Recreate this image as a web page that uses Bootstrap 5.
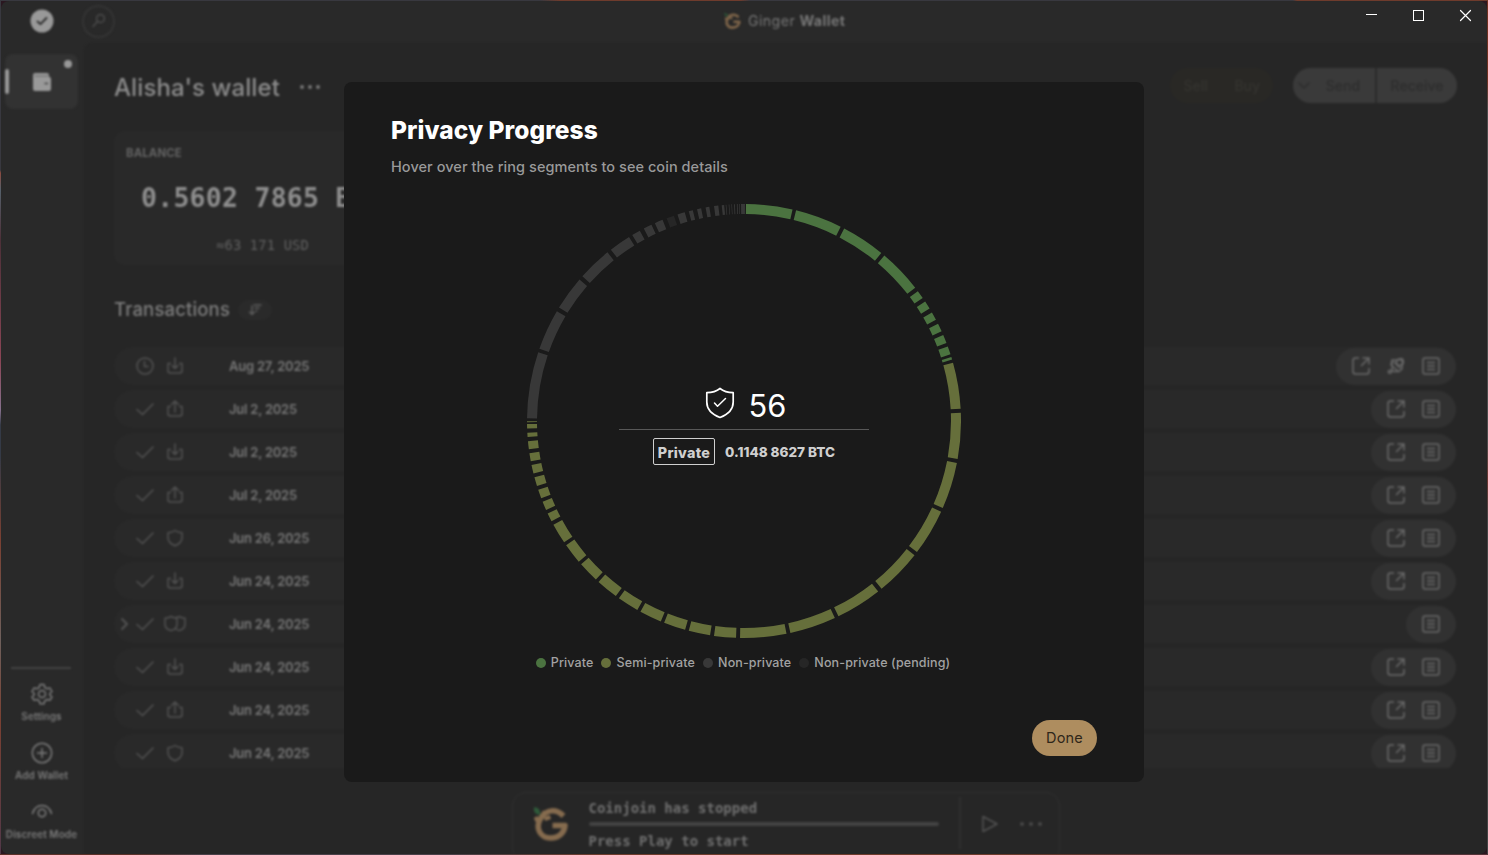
<!DOCTYPE html>
<html lang="en">
<head>
<meta charset="utf-8">
<meta name="viewport" content="width=device-width, initial-scale=1">
<title>Ginger Wallet</title>
<link href="https://cdn.jsdelivr.net/npm/bootstrap@5.3.0/dist/css/bootstrap.min.css" rel="stylesheet">
<style>
  html, body { height: 100%; }
  body { margin: 0; overflow: hidden; background: #2a1720; font-family: Inter, "Open Sans", sans-serif; color: #8c8c8c; }
  svg { display: block; fill: none; stroke: currentColor; stroke-width: 1.5; stroke-linecap: round; stroke-linejoin: round; }
  .desk { height: 100vh; padding: 1px; background:
    linear-gradient(90deg, #38383f 0 540px, #6e3b2c 560px 740px, #38383f 750px 1293px, #6e3b2c 1297px) top/100% 1px no-repeat,
    linear-gradient(90deg, #5c3028 0 130px, #4a4048 200px 450px, #6e3b2c 600px 1000px, #553338 1200px) bottom/100% 1px no-repeat,
    linear-gradient(#38383f 0 170px, #8a4a40 173px, #55606a 190px, #4c3038 240px, #8a4555 360px, #85708c 410px, #343a46 425px 455px, #7a4032 540px, #6e605c 640px, #7a4032 720px, #503848 855px) left/1px 100% no-repeat,
    linear-gradient(#6e3020 0 80px, #4c4c4c 110px 440px, #6a3630 480px, #444 520px) right/1px 100% no-repeat, #2a1720; }
  .win { height: 100%; border-radius: 8px; overflow: hidden; background: #292929; }
  .soft { filter: blur(1px); }
  .topbar { height: 42px; }
  .okdot { width: 24px; height: 24px; margin-left: 29px; margin-top: -2px; color: #292929; }
  .search { width: 33px; height: 33px; margin-left: 28px; margin-top: -2px; border: 2px solid #343434; border-radius: 50%; color: #4c4c4c; }
  .brand { left: 723px; top: 10px; height: 20px; font-size: 14.2px; line-height: 20px; letter-spacing: .4px; color: #777; gap: 6px; }
  .side { width: 83px; }
  .active-wallet { width: 73px; height: 55px; margin: 11px 0 0 4px; background: #323232; border-radius: 8px; color: #999; }
  .active-wallet .bar { left: 0; top: 15px; width: 4px; height: 25px; border-radius: 2px; background: #999; }
  .active-wallet .dot { left: 59px; top: 6px; width: 8px; height: 8px; border-radius: 50%; background: #999; }
  .sep { width: 60px; height: 2px; margin: 0 0 0 10px; background: #434343; }
  .sidenav { padding-top: 14px; margin-bottom: -6px; }
  .sideitem { height: 59px; width: 81px; font-size: 10px; font-weight: 600; line-height: 12px; letter-spacing: .08px; color: #7c7c7c; gap: 5px; }
  .pane { background: #262626; border-top-left-radius: 8px; padding: 0 30px; min-width: 0; }
  .head { height: 88px; }
  .wname { font-size: 24px; font-weight: 500; line-height: 30px; letter-spacing: .09px; margin-top: 1px; }
  .pill { height: 35px; border-radius: 18px; font-size: 14px; font-weight: 500; line-height: 35px; overflow: hidden; margin-top: -3px; }
  .trade { width: 103px; background: #292825; color: #353430; margin-right: 20px; }
  .xfer { width: 164px; background: #3a3a3a; color: #2d2d2d; }
  .xfer .cut { border-left: 2px solid #2b2b2b; }
  .bal { width: 297px; height: 134px; border-radius: 10px; background: #292929; padding-top: 14px; }
  .bal .cap { font-size: 11.4px; font-weight: 700; line-height: 16px; letter-spacing: .1px; color: #626262; margin-left: 12px; }
  .monof { font-family: "DejaVu Sans Mono", monospace; }
  .bal .amt { font-size: 26.5px; font-weight: 700; line-height: 32px; letter-spacing: .25px; color: #8e8e8e; margin: 21px 0 0 27px; white-space: pre; }
  .bal .usd { font-size: 13.8px; line-height: 20px; letter-spacing: .15px; color: #606060; margin: 21px 0 0 102px; white-space: pre; }
  .txh { height: 82px; padding-top: 8px; font-size: 18.5px; font-weight: 500; letter-spacing: .16px; color: #7d7d7d; }
  .sortp { width: 34px; height: 20px; border-radius: 10px; background: #2a2a2a; margin: -1px 0 0 8px; color: #5d5d5d; }
  .list { height: 421px; overflow: hidden; }
  .tx { height: 38px; margin-bottom: 5px; border-radius: 19px; background: #292929; flex-shrink: 0; padding-left: 4px; margin-right: 1px; color: #525252; }
  .tx .date { margin: 2px 0 0 42px; font-size: 13px; font-weight: 600; letter-spacing: -.22px; color: #777; }
  .tx .exp { width: 14px; }
  .tx .st { width: 24px; padding-left: 1px; }
  .tx .kind { width: 24px; margin-left: 7px; }
  .acts { height: 37px; border-radius: 19px; background: #313131; gap: 15px; padding: 0 15px; color: #696969; }
  .music { width: 548px; height: 70px; margin: 24px auto 0; border: 1.5px solid #303030; border-radius: 14px; font-size: 14px; font-weight: 700; color: #707070; padding-left: 19px; position: relative; }
  .music .lines { width: 350px; margin: 6px 0 0 18px; line-height: 18px; }
  .music .prog { height: 4px; margin: 5px 0 6px; background: #434343; border-radius: 2px; }
  .music .split { width: 2px; height: 52px; margin: 4px 0 0 20px; background: #2f2f2f; }
  .winbtns { right: 14px; top: 8px; gap: 31px; color: #fff; }
  .winbtns svg { stroke-width: 1; }
  .veil { inset: 0; padding-top: 82px; }
  .dlg { width: 800px; height: 700px; border-radius: 8px; background: #1a1a1a; padding: 0 47px; }
  .dlg h1 { font-size: 24.5px; font-weight: 800; line-height: 30px; letter-spacing: .05px; margin: 33px 0 0; color: #fff; }
  .dlg .sub { font-size: 14.5px; font-weight: 500; line-height: 20px; letter-spacing: .055px; margin: 12px 0 0; color: #999; }
  .ringbox { width: 434px; height: 434px; margin: 27px auto 0; }
  .ringmid { inset: 0; padding-top: 183px; }
  .num { font-size: 30.8px; line-height: 36px; margin-top: -5px; color: #fff; }
  .rule { width: 250px; height: 1px; background: #585858; }
  .tag { width: 62px; height: 27px; border: 1px solid #d0d0d0; border-radius: 2px; font-size: 14.3px; line-height: 27px; letter-spacing: .3px; }
  .amount { font-size: 13.5px; font-weight: 800; color: #cfcfcf; gap: 10px; margin-top: 8px; line-height: 28px; }
  .legend2 { font-size: 12.5px; font-weight: 500; line-height: 16px; letter-spacing: .13px; margin-top: 17px; color: #a2a2a2; gap: 8px; padding-right: 2px; }
  .legend2 i { width: 10px; height: 10px; border-radius: 50%; margin: -1px 5px 0 0; }
  .done { width: 65px; height: 36px; border-radius: 18px; padding: 0; border: 0; background: #ae8d5f; color: #2e261a; font-size: 14.5px; letter-spacing: .2px; margin-top: 49px; line-height: 36px; }
  .c-private { background: #4b7340; } .c-semi { background: #666f3b; } .c-non { background: #383838; } .c-pending { background: #262626; }
</style>
</head>
<body>
<svg width="0" height="0" class="position-absolute">
  <defs>
    <symbol id="clock" viewBox="0 0 20 20"><circle cx="10" cy="10" r="8"/><path d="M9.5 5.5V10.5H13"/></symbol>
    <symbol id="check" viewBox="0 0 20 20"><path d="M2 10.5L7.5 15.5L18 5"/></symbol>
    <symbol id="down" viewBox="0 0 20 20"><path d="M5.5 7.5H3V14.5Q3 17 5.5 17H14.500Q17 17 17 14.500V7.500H14.500M10 2V12M7 9.500L10 12.500L13 9.500"/></symbol>
    <symbol id="up" viewBox="0 0 20 20"><path d="M5.500 7.500H3V14.500Q3 17 5.500 17H14.500Q17 17 17 14.500V7.500H14.500M10 13V2.500M6.500 5.500L10 2L13.500 5.500"/></symbol>
    <symbol id="shield" viewBox="0 0 20 20"><path d="M10 2.500Q13 4.500 17 4.700V9.500Q17 15 10 17.700Q3 15 3 9.500V4.700Q7 4.500 10 2.500Z"/></symbol>
    <symbol id="coins" viewBox="0 0 24 20"><path d="M8 2.500Q11 4.200 14 4.200V10Q14 15 8 16.500Q2 15 2 10V4.200Q5 4.200 8 2.500ZM13 3.500Q15 3.500 16 2.500Q19 4.200 22 4.200V10Q22 15 16 16.500Q14.500 16.200 13 15"/></symbol>
    <symbol id="open" viewBox="0 0 20 20"><path d="M7.500 2H4.500Q2 2 2 4.500V15.500Q2 18 4.500 18H15.500Q18 18 18 15.500V12.500M10.500 9.500L17.500 2.500M12 2H18V8"/></symbol>
    <symbol id="doc" viewBox="0 0 20 20"><rect x="2" y="2" width="16" height="16" rx="2"/><path d="M6.500 6.500H13.500M6.500 10H13.500M6.500 13.500H13.500"/></symbol>
    <symbol id="rocket" viewBox="0 0 20 20"><path d="M6 4H11Q14 2 16.500 3Q18.500 6 16 9.500V13L13 15.500H7L6 13ZM6 4L5 9L12 15M8 6L14 12"/><circle cx="13.500" cy="6.500" r="3"/><circle cx="3.800" cy="15.800" r="1.500"/></symbol>
    <symbol id="ginger" viewBox="0 0 38 38"><g stroke-linecap="butt"><path stroke-width="5.500" d="M31 11C23 3 14 5 9 12C1 24 9 33 18 33C27 33 32 27 32.500 20.500H20"/><path stroke-width="4" d="M10 13L12 6M12 14L18 12M6 18L3 12"/></g><path d="M2 3Q7 3 7 9Q2 9 2 3Z" fill="#2f5a3a" stroke="#2f5a3a"/></symbol>
  </defs>
</svg>

<div class="desk">
  <div class="win position-relative">
    <div class="soft h-100 d-flex flex-column">
      <header class="topbar d-flex align-items-center flex-shrink-0 position-relative">
        <svg class="okdot" viewBox="0 0 24 24"><circle cx="12" cy="12" r="11.500" fill="#999" stroke="none"/><path d="M7.500 12.500L10.500 15.200L16.500 9" stroke-width="1.800"/></svg>
        <div class="search d-flex align-items-center justify-content-center"><svg width="16" height="16" viewBox="0 0 16 16"><circle cx="9.500" cy="5.500" r="4"/><path d="M6.500 8.500L2 13.500"/></svg></div>
        <div class="brand position-absolute d-flex align-items-center"><svg width="18" height="18" color="#80664a"><use href="#ginger"/></svg><span>Ginger <b>Wallet</b></span></div>
      </header>
      <div class="d-flex flex-grow-1 overflow-hidden">
        <aside class="side d-flex flex-column flex-shrink-0">
          <div class="active-wallet position-relative d-flex align-items-center justify-content-center">
            <span class="bar position-absolute"></span><span class="dot position-absolute"></span>
            <svg width="20" height="20" viewBox="0 0 20 20"><path d="M1 3Q1 1 3 1H15Q17 1 17 3V4.500Q19 5 19 7V17Q19 19 17 19H3Q1 19 1 17Z" fill="#999" stroke="none"/><path d="M3 4H16" stroke="#666" stroke-width="1"/><path d="M13 11.500H15.500" stroke="#444"/></svg>
          </div>
          <div class="mt-auto sep"></div>
          <nav class="sidenav d-flex flex-column">
            <div class="sideitem d-flex flex-column align-items-center"><svg width="22" height="22" viewBox="0 0 22 22"><path d="M9 1.500H13L13.800 4.500L16 5.700L19 5L21 8.500L18.800 10.500V12L21 14L19 17.200L16 16.500L13.800 17.800L13 20.700H9L8.200 17.800L6 16.500L3 17.200L1 14L3.200 12V10.500L1 8.500L3 5L6 5.700L8.200 4.500Z"/><circle cx="11" cy="11" r="3.500"/></svg><span>Settings</span></div>
            <div class="sideitem d-flex flex-column align-items-center"><svg width="22" height="22" viewBox="0 0 22 22"><circle cx="11" cy="11" r="9.700"/><path d="M11 6.500V15.500M6.500 11H15.500"/></svg><span>Add Wallet</span></div>
            <div class="sideitem d-flex flex-column align-items-center"><svg width="22" height="22" viewBox="0 0 22 22"><path d="M1.500 12.500Q4 4.500 11 4.500T20.500 12.500"/><circle cx="11" cy="12" r="3.700"/></svg><span>Discreet Mode</span></div>
          </nav>
        </aside>
        <main class="pane flex-grow-1 d-flex flex-column">
          <div class="head d-flex align-items-center flex-shrink-0">
            <span class="wname">Alisha's wallet</span>
            <svg class="ms-3" width="28" height="6" viewBox="-3 0 28 6"><g fill="#777" stroke="none"><circle cx="3" cy="3" r="2"/><circle cx="11" cy="3" r="2"/><circle cx="19" cy="3" r="2"/></g></svg>
            <div class="pill trade ms-auto d-flex text-center"><span class="w-50">Sell</span><span class="w-50">Buy</span></div>
            <div class="pill xfer d-flex text-center"><span class="w-50 d-flex align-items-center"><svg class="ms-1" width="14" height="10" viewBox="0 0 14 10"><path d="M2 2L7 7L12 2"/></svg><span class="flex-grow-1">Send</span></span><span class="w-50 cut">Receive</span></div>
          </div>
          <section class="bal flex-shrink-0 d-flex flex-column align-items-start">
            <span class="cap">BALANCE</span>
            <span class="amt monof">0.5602 7865 BTC</span>
            <span class="usd monof">≈63 171 USD</span>
          </section>
          <div class="txh d-flex align-items-center flex-shrink-0"><span>Transactions</span><span class="sortp d-flex align-items-center justify-content-center"><svg width="14" height="14" viewBox="0 0 14 14"><path d="M4 3V11M1.500 9L4 11.500L6.500 9M6 2H13M7 5H11M8 8H9"/></svg></span></div>
          <div class="list d-flex flex-column flex-shrink-0" id="list"></div>
          <div class="music d-flex align-items-start flex-shrink-0">
            <svg width="39" height="38" color="#856b4e" style="margin-top:12px"><use href="#ginger"/></svg>
            <div class="lines monof"><div>Coinjoin has stopped</div><div class="prog"></div><div>Press Play to start</div></div>
            <div class="split"></div>
            <svg width="18" height="18" viewBox="0 0 18 18" color="#525252" style="margin:22px 0 0 20px"><path d="M2 1.500L16 9L2 16.500Z"/></svg>
            <svg width="24" height="6" viewBox="0 0 24 6" style="margin:28px 0 0 20px"><g fill="#484848" stroke="none"><circle cx="3" cy="3" r="2"/><circle cx="12" cy="3" r="2"/><circle cx="21" cy="3" r="2"/></g></svg>
          </div>
        </main>
      </div>
    </div>
  </div>
</div>

<div class="veil position-absolute d-flex justify-content-center align-items-start">
  <div class="dlg d-flex flex-column">
    <h1>Privacy Progress</h1>
    <p class="sub">Hover over the ring segments to see coin details</p>
    <div class="ringbox position-relative flex-shrink-0">
      <svg id="ring" width="434" height="434" viewBox="-217 -217 434 434"></svg>
      <div class="ringmid position-absolute d-flex flex-column align-items-center">
        <div class="d-flex align-items-center" style="gap:14px; height:42px; margin-left:3px">
          <svg width="30" height="32" viewBox="0 0 30 32" color="#fff" style="margin-top:-11px"><path stroke-width="1.700" d="M15 1.500Q20 5.500 28.200 5.700V15Q28.200 25.500 15 30.500Q1.800 25.500 1.800 15V5.700Q10 5.500 15 1.500Z"/><path d="M9.500 16L12.500 19.300L20.500 11.500"/></svg>
          <span class="num">56</span>
        </div>
        <div class="rule"></div>
        <div class="amount d-flex"><span class="tag text-center">Private</span><span>0.1148 8627 BTC</span></div>
      </div>
    </div>
    <div class="legend2 d-flex justify-content-center">
      <span class="d-flex align-items-center"><i class="c-private"></i>Private</span>
      <span class="d-flex align-items-center"><i class="c-semi"></i>Semi-private</span>
      <span class="d-flex align-items-center"><i class="c-non"></i>Non-private</span>
      <span class="d-flex align-items-center"><i class="c-pending"></i>Non-private (pending)</span>
    </div>
    <button class="btn done align-self-end">Done</button>
  </div>
</div>

<div class="winbtns position-absolute d-flex">
  <svg width="16" height="14" viewBox="0 0 16 14"><path d="M2.500 6.500H12.500" stroke-linecap="square"/></svg>
  <svg width="16" height="14" viewBox="0 0 16 14"><rect x="2.500" y="2.500" width="10" height="10" stroke-linejoin="miter"/></svg>
  <svg width="16" height="14" viewBox="0 0 16 14"><path d="M2.500 2.500L12.500 12.500M12.500 2.500L2.500 12.500" stroke-width="1.200"/></svg>
</div>

<script src="https://cdn.jsdelivr.net/npm/bootstrap@5.3.0/dist/js/bootstrap.bundle.min.js"></script>
<script>
  const icon = (id, w = 20) => `<svg width="${w}" height="20"><use href="#${id}"/></svg>`;
  const txs = [
    ['clock', 'down', 'Aug 27, 2025', ['open', 'rocket', 'doc']], ['check', 'up', 'Jul 2, 2025', ['open', 'doc']],
    ['check', 'down', 'Jul 2, 2025', ['open', 'doc']], ['check', 'up', 'Jul 2, 2025', ['open', 'doc']],
    ['check', 'shield', 'Jun 26, 2025', ['open', 'doc']], ['check', 'down', 'Jun 24, 2025', ['open', 'doc']],
    ['check', 'coins', 'Jun 24, 2025', ['doc']], ['check', 'down', 'Jun 24, 2025', ['open', 'doc']],
    ['check', 'up', 'Jun 24, 2025', ['open', 'doc']], ['check', 'shield', 'Jun 24, 2025', ['open', 'doc']]];
  document.getElementById('list').innerHTML = txs.map(([s, k, d, a]) => `
    <div class="tx d-flex align-items-center">
      <span class="exp">${k === 'coins' ? '<svg width="12" height="16" viewBox="0 0 12 16"><path stroke-width="2" d="M4 3L9 8L4 13"/></svg>' : ''}</span>
      <span class="st d-flex justify-content-center">${icon(s)}</span>
      <span class="kind d-flex justify-content-center">${icon(k, k === 'coins' ? 24 : 20)}</span>
      <span class="date">${d}</span>
      <span class="acts ms-auto d-flex align-items-center">${a.map(x => icon(x)).join('')}</span>
    </div>`).join('');

  // Ring segments: colour, then start/end angles in degrees clockwise from the top.
  const groups = [
    ['#4b7340', [0.53,12.93, 13.89,26.45, 27.5,39.25, 40.3,52.1, 53.24,55.45, 56.6,58.8, 60.0,62.2, 63.4,65.6, 66.65,68.9, 69.9,72.1, 72.85,73.55]],
    ['#666f3b', [74.4,86.75, 87.85,100.1, 101.15,113.65, 114.7,127.15, 128.2,140.65, 141.8,154.2, 155.25,167.65, 168.7,181.05, 182.1,187.95, 189,194.75, 195.75,201.6, 202.55,208.5, 209.45,215.2, 216.2,222.1, 223.05,228.65, 229.6,235.05, 236,241.45, 242.5,244.8, 245.8,248.15, 249.15,251.5, 252.55,254.95, 256,258.3, 259.3,261.45, 262.5,264.65, 265.8,266.9, 268,269.2, 269.7,269.95]],
    ['#383838', [270.7,288.5, 289.45,300.4, 301.5,310.7, 311.85,321, 322.15,328, 329,331.3, 332.5,334.75, 335.75,337.95, 342.15,344.15, 345.25,346.35, 347.5,348.6, 349.8,350.8, 352.05,353.2, 354.1,354.75, 355.16,355.34, 355.95,356.13, 356.66,356.83, 357.36,357.6, 358.11,358.33, 358.72,358.9, 359.21,360.26]],
    ['#262626', [339.1,341.15]]];
  const pt = (r, a) => { const t = a * Math.PI / 180; return (r * Math.sin(t)).toFixed(2) + ' ' + (-r * Math.cos(t)).toFixed(2); };
  document.getElementById('ring').innerHTML = groups.map(([c, v]) => {
    let d = '';
    for (let i = 0; i < v.length; i += 2) d += `M${pt(217, v[i])}A217 217 0 0 1 ${pt(217, v[i + 1])}L${pt(207, v[i + 1])}A207 207 0 0 0 ${pt(207, v[i])}Z`;
    return `<path fill="${c}" stroke="none" d="${d}"/>`;
  }).join('');
</script>
</body>
</html>
